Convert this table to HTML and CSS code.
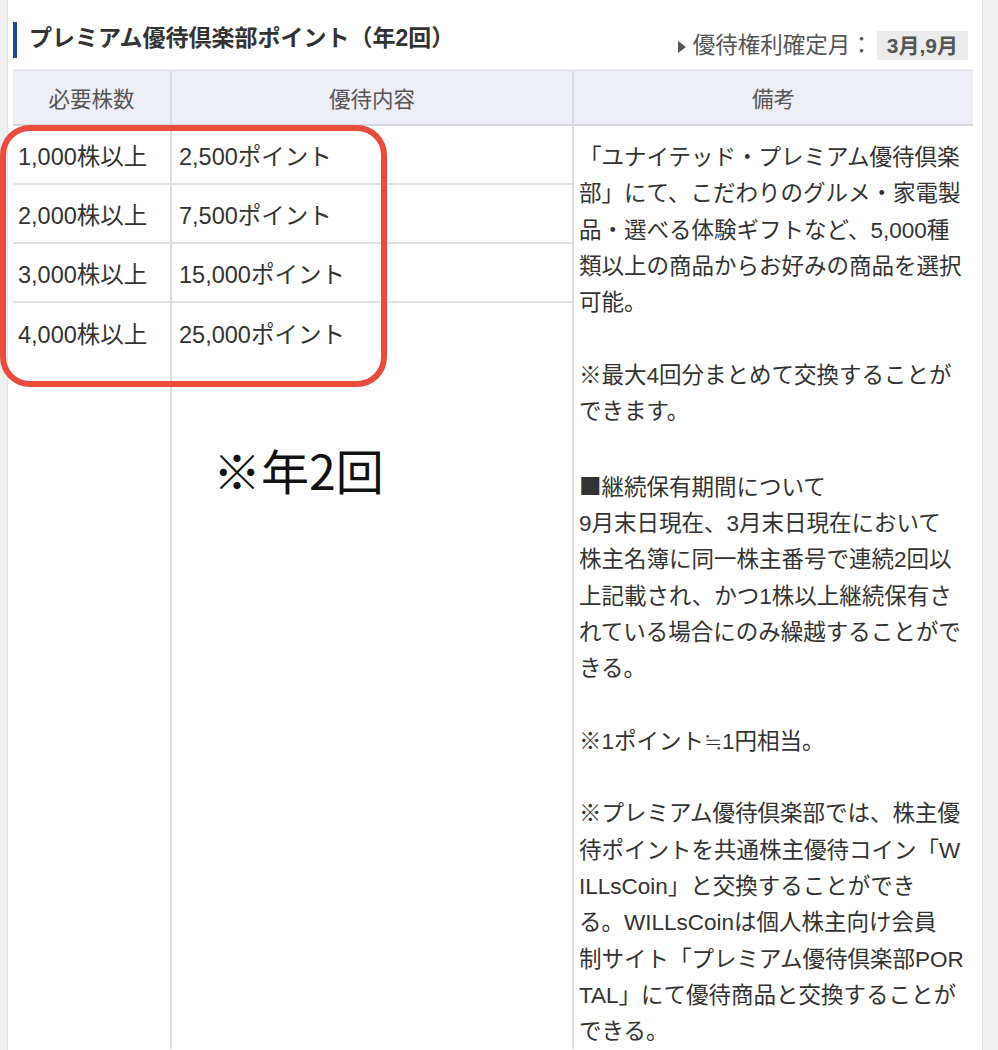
FILE: index.html
```html
<!DOCTYPE html>
<html lang="ja">
<head>
<meta charset="utf-8">
<title>プレミアム優待倶楽部ポイント</title>
<link rel="stylesheet" href="styles.css">
</head>
<body>
<div class="page">
  <div class="title-bar">
    <h2 class="title">プレミアム優待倶楽部ポイント（年2回）</h2>
    <div class="record">
      <span class="tri"></span>
      <span class="record-label">優待権利確定月：</span>
      <span class="badge">3月,9月</span>
    </div>
  </div>
  <div class="tbl">
    <div class="th">必要株数</div>
    <div class="th">優待内容</div>
    <div class="th th-last">備考</div>
  </div>
  <div class="tbody">
    <div class="td c1">1,000株以上</div>
    <div class="td c2">2,500ポイント</div>
    <div class="td c1">2,000株以上</div>
    <div class="td c2">7,500ポイント</div>
    <div class="td c1">3,000株以上</div>
    <div class="td c2">15,000ポイント</div>
    <div class="td c1 last">4,000株以上</div>
    <div class="td c2 last">25,000ポイント</div>
    <div class="td c1 last filler"></div>
    <div class="td c2 last filler"></div>
    <div class="note">「ユナイテッド・プレミアム優待倶楽<br>部」にて、こだわりのグルメ・家電製<br>品・選べる体験ギフトなど、5,000種<br>類以上の商品からお好みの商品を選択<br>可能。<br><br>※最大4回分まとめて交換することが<br>できます。<br><br><span class="sq">■</span>継続保有期間について<br>9月末日現在、3月末日現在において<br>株主名簿に同一株主番号で連続2回以<br>上記載され、かつ1株以上継続保有さ<br>れている場合にのみ繰越することがで<br>きる。<br><br>※1ポイント≒1円相当。<br><br>※プレミアム優待倶楽部では、株主優<br>待ポイントを共通株主優待コイン「W<br>ILLsCoin」と交換することができ<br>る。WILLsCoinは個人株主向け会員<br>制サイト「プレミアム優待倶楽部POR<br>TAL」にて優待商品と交換することが<br>できる。</div>
  </div>
</div>
<div class="highlight"></div>
<div class="annot">※年2回</div>
</body>
</html>
```
FILE: styles.css
```css
html, body {
  margin: 0;
  padding: 0;
}
body {
  position: relative;
  width: 998px;
  height: 1050px;
  overflow: hidden;
  background: #efefef;
  font-family: "Liberation Sans", "Noto Sans CJK JP", sans-serif;
  color: #333;
}
.page {
  margin-left: 7px;
  width: 976px;
  height: 1050px;
  box-sizing: border-box;
  background: #fff;
  border-left: 1px solid #e4e4e4;
  border-right: 1px solid #e4e4e4;
  padding: 0 9px 0 5px;
}
.title-bar {
  height: 70px;
  box-sizing: border-box;
  border-bottom: 1px solid #f0f0f0;
  display: flex;
  justify-content: space-between;
  align-items: flex-start;
}
.title {
  margin: 22px 0 0 0;
  padding: 0 0 4px 12px;
  border-left: 4px solid #1d4b98;
  font-size: 23px;
  line-height: 32px;
  font-weight: bold;
  color: #333;
}
.record {
  margin-top: 31px;
  margin-right: 5px;
  display: flex;
  align-items: center;
  color: #555;
  font-size: 22.5px;
}
.tri {
  width: 0;
  height: 0;
  border-top: 6px solid transparent;
  border-bottom: 6px solid transparent;
  border-left: 8px solid #555;
  margin-right: 7px;
  margin-top: 2px;
}
.record-label {
  line-height: 29px;
}
.badge {
  margin-left: 4px;
  background: #ececec;
  padding: 0 10px;
  height: 29px;
  line-height: 29px;
  font-size: 21px;
  font-weight: bold;
  color: #555;
}
.tbl {
  display: grid;
  grid-template-columns: 159px 402px 1fr;
  background: #eeeef6;
  border-top: 1px solid #e2e2ea;
  border-bottom: 2px solid #d6d6e0;
  height: 56px;
  box-sizing: border-box;
}
.th {
  display: flex;
  align-items: center;
  justify-content: center;
  font-size: 21.5px;
  color: #555;
  border-right: 2px solid #dcdce4;
}
.th-last {
  border-right: none;
}
.tbody {
  display: grid;
  grid-template-columns: 159px 402px 1fr;
  grid-template-rows: repeat(4, 59px) 1fr;
  height: 923px;
}
.td {
  display: flex;
  align-items: center;
  font-size: 23.5px;
  color: #333;
  border-right: 2px solid #dcdcdc;
  border-bottom: 2px solid #e0e0e0;
  box-sizing: border-box;
}
.c1 {
  grid-column: 1;
  padding-left: 5px;
}
.c2 {
  grid-column: 2;
  padding-left: 7px;
}
.td.last {
  border-bottom: none;
}
.note {
  grid-column: 3;
  grid-row: 1 / 6;
  padding: 14px 0 0 5px;
  font-size: 22.5px;
  line-height: 36.3px;
  color: #333;
  white-space: nowrap;
}
.sq {
  font-family: "Noto Sans CJK JP", sans-serif;
}
.highlight {
  position: absolute;
  left: 0;
  top: 125px;
  width: 387px;
  height: 262px;
  box-sizing: border-box;
  border: 6px solid #e74c3c;
  border-radius: 30px;
}
.annot {
  position: absolute;
  left: 213px;
  top: 445px;
  font-family: "Noto Sans CJK JP", sans-serif;
  font-size: 48px;
  line-height: 48px;
  color: #111;
}
```
